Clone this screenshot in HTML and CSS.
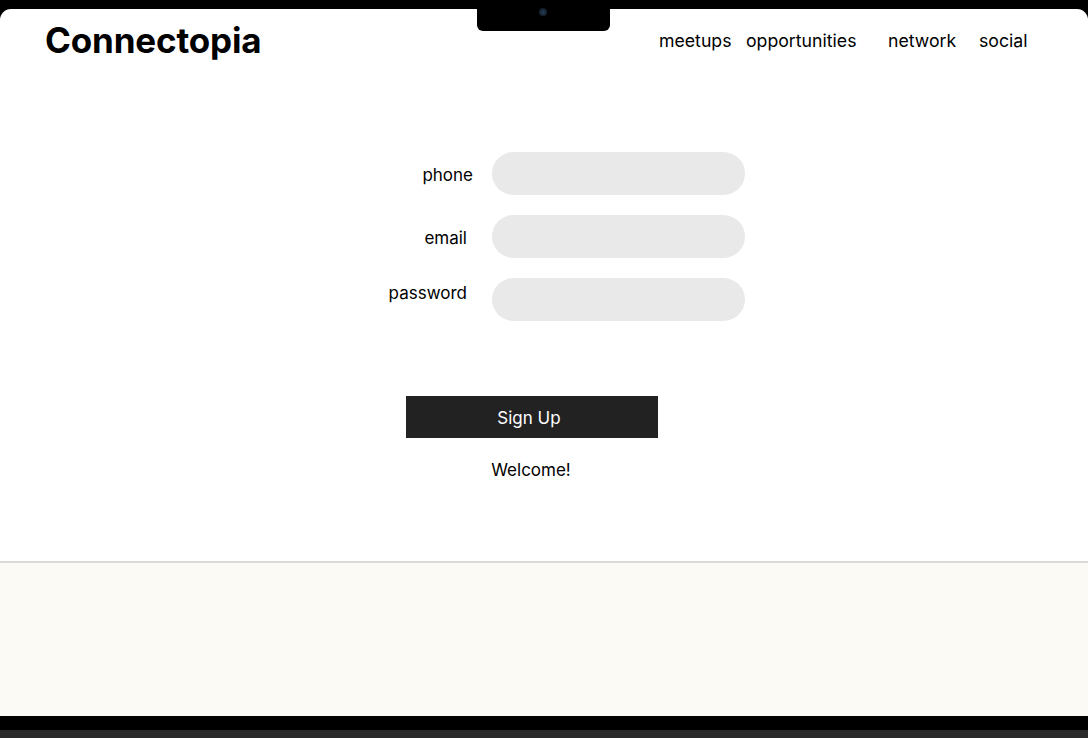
FILE: index.html
```html
<!DOCTYPE html>
<html lang="en">
<head>
<meta charset="utf-8">
<title>Connectopia</title>
<link rel="stylesheet" href="styles.css">
</head>
<body>
<div class="device">
  <div class="notch"><span class="camera"></span></div>
  <div class="screen">
    <header class="header">
      <div class="logo">Connectopia</div>
      <nav class="nav">
        <a class="nav-link">meetups</a>
        <a class="nav-link">opportunities</a>
        <a class="nav-link">network</a>
        <a class="nav-link">social</a>
      </nav>
    </header>
    <main class="main">
      <form class="form">
        <label class="label label-phone">phone</label>
        <div class="input"></div>
        <label class="label label-email">email</label>
        <div class="input"></div>
        <label class="label label-password">password</label>
        <div class="input"></div>
      </form>
      <button class="btn" type="button">Sign Up</button>
      <p class="welcome">Welcome!</p>
    </main>
    <div class="divider"></div>
    <section class="cream"></section>
  </div>
  <div class="base"></div>
</div>
</body>
</html>
```
FILE: styles.css
```css
* { box-sizing: border-box; }
html, body { margin: 0; padding: 0; }
body {
  background: #000;
  font-family: Inter, "Noto Sans", "Liberation Sans", sans-serif;
  color: #000;
  width: 1088px;
  height: 738px;
  overflow: hidden;
}
.device {
  position: relative;
  padding-top: 9px;
  background: #000;
}
.notch {
  position: absolute;
  left: 477px;
  top: 0;
  width: 133px;
  height: 31px;
  background: #000;
  border-radius: 0 0 6px 6px;
  z-index: 2;
}
.camera {
  position: absolute;
  left: 62px;
  top: 8px;
  width: 8px;
  height: 8px;
  border-radius: 50%;
  background: radial-gradient(circle at 50% 55%, #24405a 0, #14202c 60%, #0a0d12 100%);
}
.screen {
  background: #fff;
  border-radius: 11px 11px 0 0;
  overflow: hidden;
}
.header {
  display: flex;
  align-items: center;
  justify-content: space-between;
  height: 62px;
  padding: 9px 0 0 45px;
}
.logo {
  font-size: 35px;
  font-weight: 700;
  line-height: 44px;
  letter-spacing: -0.15px;
  margin-top: -10px;
}
.nav {
  display: grid;
  grid-template-columns: 87px 142px 91px 109px;
  margin-top: -8px;
}
.nav-link {
  font-size: 17.7px;
  line-height: 24px;
  color: #000;
  text-decoration: none;
}
.main {
  height: 490px;
  padding-top: 81px;
  display: flex;
  flex-direction: column;
}
.form {
  display: grid;
  grid-template-columns: 86px 253px;
  column-gap: 19px;
  row-gap: 20px;
  margin-left: 387px;
}
.label {
  font-size: 17px;
  line-height: 22px;
  text-align: right;
  align-self: center;
}
.label-email, .label-password { padding-right: 6px; }
.label-phone { margin-top: 3px; }
.label-email { margin-top: 3px; }
.label-password { align-self: start; margin-top: 4px; }
.input {
  height: 43px;
  border-radius: 22px;
  background: #e9e9e9;
}
.btn {
  margin: 75px 0 0 406px;
  width: 252px;
  height: 42px;
  border: 0;
  background: #222;
  color: #fff;
  font-family: inherit;
  font-size: 17px;
  padding: 2px 6px 0 0;
}
.welcome {
  margin: 22px 0 0 0;
  width: 1062px;
  text-align: center;
  font-size: 17px;
  line-height: 20px;
}
.divider {
  height: 2px;
  background: #dadada;
}
.cream {
  height: 153px;
  background: #fbfaf4;
}
.base {
  height: 22px;
  background: #000;
  border-bottom: 8px solid #2a2a2a;
}
```
